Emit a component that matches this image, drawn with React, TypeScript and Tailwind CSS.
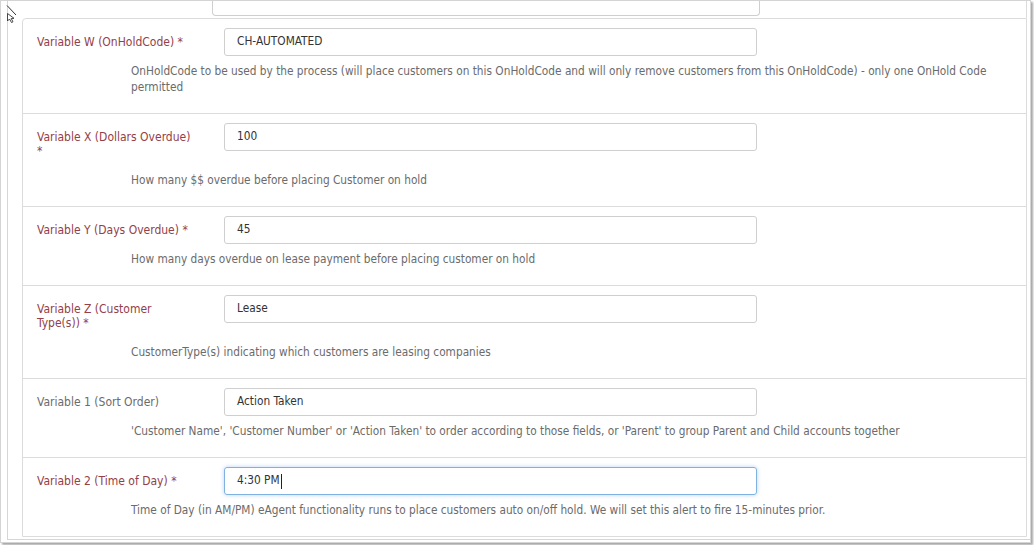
import React from "react";

type Field = {
  label: string;
  value: string;
  help: string;
  required?: boolean;
  focused?: boolean;
};

const FIELDS: Field[] = [
  {
    label: "Variable W (OnHoldCode) *",
    value: "CH-AUTOMATED",
    help: "OnHoldCode to be used by the process (will place customers on this OnHoldCode and will only remove customers from this OnHoldCode) - only one OnHold Code permitted",
    required: true,
  },
  {
    label: "Variable X (Dollars Overdue) *",
    value: "100",
    help: "How many $$ overdue before placing Customer on hold",
    required: true,
  },
  {
    label: "Variable Y (Days Overdue) *",
    value: "45",
    help: "How many days overdue on lease payment before placing customer on hold",
    required: true,
  },
  {
    label: "Variable Z (Customer Type(s)) *",
    value: "Lease",
    help: "CustomerType(s) indicating which customers are leasing companies",
    required: true,
  },
  {
    label: "Variable 1 (Sort Order)",
    value: "Action Taken",
    help: "'Customer Name', 'Customer Number' or 'Action Taken' to order according to those fields, or 'Parent' to group Parent and Child accounts together",
  },
  {
    label: "Variable 2 (Time of Day) *",
    value: "4:30 PM",
    help: "Time of Day (in AM/PM) eAgent functionality runs to place customers auto on/off hold. We will set this alert to fire 15-minutes prior.",
    required: true,
    focused: true,
  },
];

const FONT = "font-['DejaVu_Sans_Condensed','Liberation_Sans_Narrow','Liberation_Sans',sans-serif]";

function FieldRow({ field, last }: { field: Field; last: boolean }) {
  return (
    <div className={`pt-[9px] pb-[18px] pl-[14px] pr-[15px] ${last ? "" : "border-b border-[#dcdcdc]"}`}>
      <div className="flex items-start">
        <label
          className={`w-[187px] shrink-0 py-[7px] pr-[29px] text-[12px] leading-[14px] ${
            field.required ? "text-[#94404a]" : "text-[#6b6b6b]"
          }`}
        >
          {field.label}
        </label>
        <div
          className={`w-[533px] h-[28px] rounded-[3px] border flex items-center pl-[12px] text-[11.75px] text-[#333] ${
            field.focused
              ? "border-[#7fb2e0] shadow-[0_0_4px_rgba(102,155,233,0.45)]"
              : "border-[#cfcfcf]"
          }`}
        >
          {field.value}
          {field.focused && <span className="ml-[1px] inline-block w-px h-[15px] bg-[#222]" />}
        </div>
      </div>
      <p className="mt-[7px] ml-[94px] text-[11.75px] leading-[16px] text-[#6b6b6b]">{field.help}</p>
    </div>
  );
}

export default function App() {
  return (
    <div className={`relative w-[1034px] h-[545px] bg-white overflow-hidden ${FONT}`}>
      <div className="w-[1031px] h-[543px] border border-[#d4d4d4] shadow-[2px_2px_2px_rgba(0,0,0,0.35)] pl-[6px]">
        <div className="h-[539px] border-l border-b border-[#d6d6d6] pl-[14px] pr-[3px]">
          {/* tail of the previous section */}
          <div className="h-[17px] border-r border-[#dcdcdc]">
            <div className="ml-[190px] w-[548px] h-[15px] border-x border-b border-[#cfcfcf] rounded-b-[4px]" />
          </div>
          <div className="h-[519px] border border-[#dcdcdc] rounded-tl-[4px]">
            {FIELDS.map((f, i) => (
              <FieldRow key={f.label} field={f} last={i === FIELDS.length - 1} />
            ))}
          </div>
        </div>
      </div>
      {/* mouse cursor */}
      <svg className="absolute left-[4px] top-[4px]" width="16" height="20" viewBox="0 0 16 20">
        <line x1="3" y1="1.5" x2="12" y2="11" stroke="#333" strokeWidth="1" />
        <path d="M3.5 9.5 L3.5 17 L5.5 15 L7.5 18.5 L9 17.8 L7.2 14.5 L10 14.3 Z" fill="#fff" stroke="#333" strokeWidth="0.9" strokeLinejoin="round" />
      </svg>
    </div>
  );
}
